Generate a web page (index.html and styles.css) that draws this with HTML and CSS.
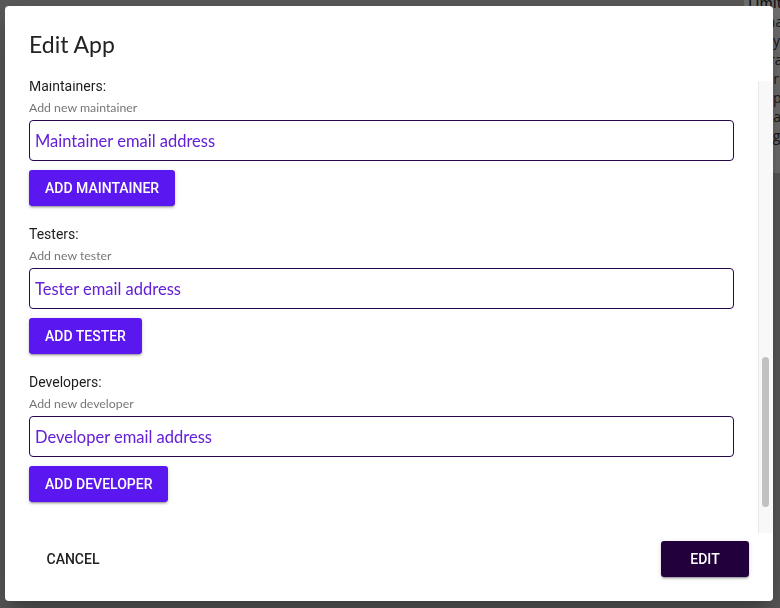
FILE: index.html
```html
<!DOCTYPE html>
<html lang="en">
	<head>
		<meta charset="utf-8">
		<link rel="stylesheet" href="styles.css">
	</head>
	<body>
		<div class="page">
			<main class="page-main"></main>
			<aside class="limits">
				<ul class="limits-list">
					<li class="limits-title">Limits</li>
					<li>Signals per day</li>
					<li>Daily uploads</li>
					<li>Storage</li>
					<li>Internal testers</li>
					<li>Endpoints</li>
					<li>Capacity</li>
					<li>Usage limit</li>
				</ul>
			</aside>
		</div>

		<div class="backdrop">
			<div class="dialog">
				<h2 class="dialog-title">Edit App</h2>
				<div class="dialog-body">
					<div class="dialog-content" id="content">
						<form class="app-form">
							<div class="group">
								<label class="group-label">Name:</label>
								<p class="hint">Shown in the app list</p>
								<input class="text-input" type="text" placeholder="App name">
							</div>
							<div class="group">
								<label class="group-label">Package:</label>
								<p class="hint">Bundle or package identifier</p>
								<input class="text-input" type="text" placeholder="com.example.app">
							</div>
							<div class="group">
								<label class="group-label">Description:</label>
								<p class="hint">A few lines about the app</p>
								<textarea class="text-input text-area" placeholder="Description"></textarea>
							</div>
							<div class="group">
								<label class="group-label">Website:</label>
								<p class="hint">Public home page</p>
								<input class="text-input" type="url" placeholder="https://">
							</div>
							<div class="group">
								<label class="group-label">Repository:</label>
								<p class="hint">Source code location</p>
								<input class="text-input" type="url" placeholder="https://">
							</div>
							<div class="group">
								<label class="group-label">Icon:</label>
								<p class="hint">Link to a square image</p>
								<input class="text-input" type="url" placeholder="Icon URL">
							</div>
							<div class="group">
								<label class="group-label">Support:</label>
								<p class="hint">Where users can reach you</p>
								<input class="text-input" type="email" placeholder="Support email address">
							</div>

							<div class="group" id="maintainers">
								<label class="group-label">Maintainers:</label>
								<p class="hint">Add new maintainer</p>
								<input class="text-input" type="email" placeholder="Maintainer email address">
								<button class="btn btn-primary" type="button">Add maintainer</button>
							</div>
							<div class="group">
								<label class="group-label">Testers:</label>
								<p class="hint">Add new tester</p>
								<input class="text-input" type="email" placeholder="Tester email address">
								<button class="btn btn-primary" type="button">Add tester</button>
							</div>
							<div class="group">
								<label class="group-label">Developers:</label>
								<p class="hint">Add new developer</p>
								<input class="text-input" type="email" placeholder="Developer email address">
								<button class="btn btn-primary" type="button">Add developer</button>
							</div>
						</form>
					</div>
					<div class="scrollbar" id="rail">
						<div class="scrollbar-thumb" id="thumb"></div>
					</div>
				</div>
				<div class="dialog-actions">
					<button class="btn btn-text" type="button">Cancel</button>
					<button class="btn btn-dark" type="button">Edit</button>
				</div>
			</div>
		</div>

		<script>
			var content = document.getElementById("content"),
				maintainers = document.getElementById("maintainers"),
				rail = document.getElementById("rail"),
				thumb = document.getElementById("thumb");

			// keep the rail thumb in step with the form scroll
			function drawThumb() {
				var h = rail.clientHeight,
					total = content.scrollHeight;

				thumb.style.height = Math.round(h * content.clientHeight / total) + "px";
				thumb.style.marginTop = Math.round(h * content.scrollTop / total) + "px";
			}

			content.addEventListener("scroll", drawThumb, false);

			// open the dialog on the people part of the form
			content.scrollTop = maintainers.offsetTop + 5;
			drawThumb();
		</script>
	</body>
</html>
```

FILE: styles.css
```css
*, *::before, *::after {
	margin: 0;
	padding: 0;
	box-sizing: border-box;
}
html {
	height: 100%;
}
body {
	height: 100%;
	overflow: hidden;
	background-color: #b4b4b4;
	font-family: Roboto, "Liberation Sans", sans-serif;
}

/* page behind the dialog */
.page {
	display: grid;
	grid-template-columns: 744px 1fr;
	height: 100%;
}
.limits {
	align-self: start;
	height: 173px;
	padding-left: 4px;
	background-color: #e1e1e1;
	overflow: hidden;
}
.limits-list {
	list-style: none;
	margin-top: -7px;
	font-family: "Open Sans", sans-serif;
	font-size: 14px;
	line-height: 19px;
	color: #333;
	white-space: nowrap;
}
.limits-title {
	font-weight: 600;
}

/* dialog */
.backdrop {
	position: fixed;
	inset: 0;
	display: flex;
	padding: 6px 7px 7px 5px;
	background-color: rgba(0,0,0,.5);
}
.dialog {
	flex: 1;
	display: flex;
	flex-direction: column;
	background-color: #fff;
	border-radius: 4px;
	box-shadow: 0 11px 15px -7px rgba(0,0,0,.2), 0 24px 38px 3px rgba(0,0,0,.14), 0 9px 46px 8px rgba(0,0,0,.12);
}
.dialog-title {
	padding: 22px 24px 21px;
	font-family: Lato, sans-serif;
	font-size: 23px;
	font-weight: 400;
	line-height: 32px;
	color: #222;
}
.dialog-body {
	flex: 1;
	min-height: 0;
	display: flex;
}
.dialog-content {
	position: relative;
	flex: 1;
	overflow-y: auto;
	padding: 0 24px;
	scrollbar-width: none;
}
.dialog-content::-webkit-scrollbar {
	display: none;
}
.scrollbar {
	flex: 0 0 15px;
	padding: 0 4px 0 3px;
	background-color: #f8f8f8;
	border-left: 1px solid #e8e8e8;
}
.scrollbar-thumb {
	width: 7px;
	border-radius: 4px;
	background-color: #c1c1c1;
}
.dialog-actions {
	display: flex;
	justify-content: space-between;
	padding: 8px 24px 24px;
}

/* form */
.app-form {
	padding: 8px 0 90px;
}
.group {
	display: flex;
	flex-direction: column;
	align-items: flex-start;
	margin-bottom: 18px;
}
.group-label {
	font-size: 14px;
	line-height: 20px;
	color: #1d1d1d;
}
.hint {
	margin-top: 4px;
	font-family: Lato, sans-serif;
	font-size: 12.3px;
	line-height: 16px;
	color: #777;
}
.text-input {
	align-self: stretch;
	height: 41px;
	margin-top: 4px;
	padding: 0 5px;
	border: 1px solid #28074f;
	border-radius: 4px;
	font-family: Lato, sans-serif;
	font-size: 16.5px;
	color: #3b0f8a;
	outline: none;
}
.text-input::placeholder {
	color: #6420d8;
	opacity: 1;
}
.text-area {
	height: 140px;
	padding: 8px 5px;
	resize: none;
}

/* buttons */
.btn {
	height: 36px;
	min-width: 88px;
	padding: 0 16px;
	border: none;
	border-radius: 3px;
	background: none;
	font-family: Roboto, sans-serif;
	font-size: 14px;
	font-weight: 500;
	text-transform: uppercase;
	cursor: pointer;
}
.btn-primary {
	margin-top: 9px;
	background-color: #5b17ef;
	color: #fff;
	box-shadow: 0 3px 1px -2px rgba(0,0,0,.2), 0 2px 2px 0 rgba(0,0,0,.14), 0 1px 5px 0 rgba(0,0,0,.12);
}
.btn-text {
	color: #222;
}
.btn-dark {
	background-color: #22003b;
	color: #fff;
	box-shadow: 0 3px 1px -2px rgba(0,0,0,.2), 0 2px 2px 0 rgba(0,0,0,.14), 0 1px 5px 0 rgba(0,0,0,.12);
}
```
